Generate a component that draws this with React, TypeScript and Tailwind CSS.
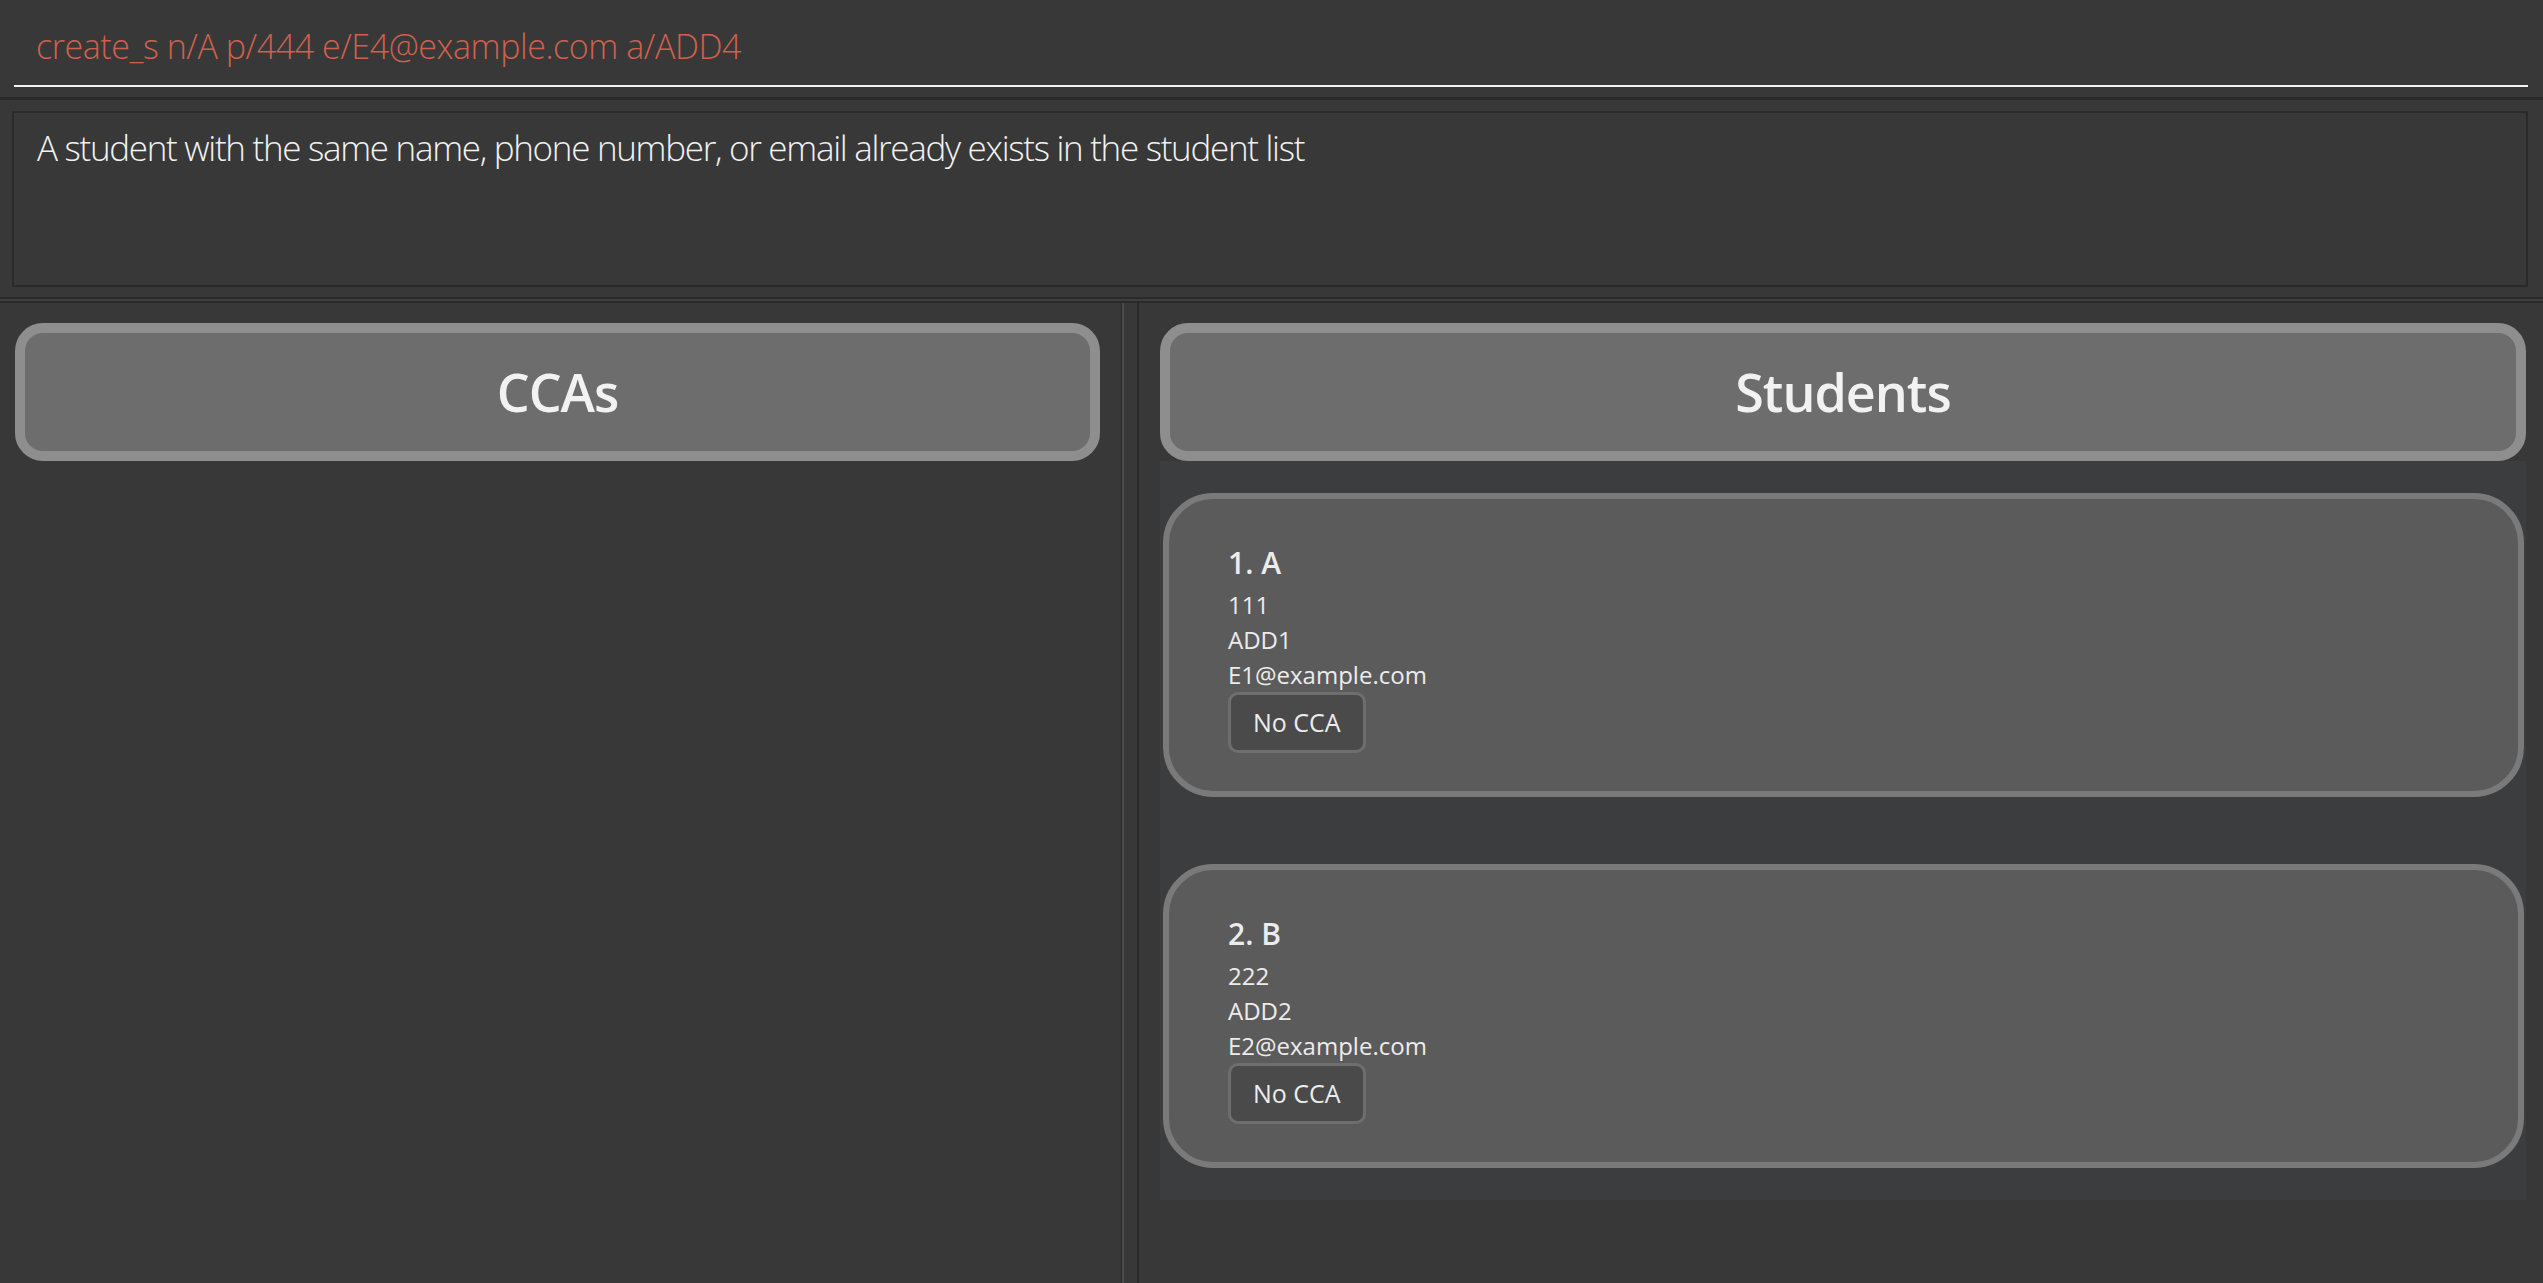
const font = { fontFamily: '"Open Sans", "Noto Sans", sans-serif' };

interface Student {
  index: number;
  name: string;
  phone: string;
  address: string;
  email: string;
}

const students: Student[] = [
  { index: 1, name: 'A', phone: '111', address: 'ADD1', email: 'E1@example.com' },
  { index: 2, name: 'B', phone: '222', address: 'ADD2', email: 'E2@example.com' },
];

function PanelHeader({ title }: { title: string }) {
  return (
    <div className="h-[138px] shrink-0 border-[10px] border-[#8e8e8e] bg-[#6d6d6d] rounded-[28px] flex items-center justify-center">
      <span className="text-[52px] leading-none font-semibold tracking-[-1px] text-[#f2f2f2]">{title}</span>
    </div>
  );
}

function StudentCard({ student }: { student: Student }) {
  return (
    <div className="h-[304px] border-[6px] border-[#7a7a7a] bg-[#5b5b5b] rounded-[50px] pl-[59px] pt-[44px] text-[#ececec]">
      <div className="text-[30px] leading-[40px] font-semibold">
        {student.index}. {student.name}
      </div>
      <div className="mt-[4px] text-[24px] leading-[35px]">
        <div>{student.phone}</div>
        <div>{student.address}</div>
        <div>{student.email}</div>
      </div>
      <div className="inline-flex items-center h-[61px] px-[22px] border-[3px] border-[#6e6e6e] bg-[#4a4a4a] rounded-[10px] text-[25px]">
        No CCA
      </div>
    </div>
  );
}

export default function App() {
  return (
    <div className="w-[2543px] h-[1283px] bg-[#383838] flex flex-col overflow-hidden" style={font}>
      {/* command box */}
      <div className="h-[97px] shrink-0 flex flex-col">
        <div className="pt-[23px] pl-[36px] h-[69px] text-[34px] leading-[46px] font-light tracking-[-0.45px] text-[#d0604c] whitespace-nowrap">
          create_s n/A p/444 e/E4@example.com a/ADD4
        </div>
        <div className="mt-[16px] ml-[14px] mr-[15px] h-[2px] bg-[#f4f4f4]" />
      </div>
      <div className="h-[3px] shrink-0 bg-[#2a2a2a]" />

      {/* result display */}
      <div className="h-[197px] shrink-0 pt-[11px] pl-[12px] pr-[15px]">
        <div className="h-[176px] border-2 border-[#2a2a2a] pt-[11px] pl-[23px] text-[35px] leading-[48px] font-light tracking-[-1.3px] text-[#f2f2f2] whitespace-nowrap">
          A student with the same name, phone number, or email already exists in the student list
        </div>
      </div>
      <div className="h-[2px] shrink-0 bg-[#2a2a2a]" />
      <div className="h-[2px] shrink-0 bg-[#3e3e3e]" />
      <div className="h-[2px] shrink-0 bg-[#2a2a2a]" />

      {/* split pane */}
      <div className="flex-1 flex min-h-0">
        <div className="w-[1121px] shrink-0 pt-[20px] pl-[15px] pr-[21px]">
          <PanelHeader title="CCAs" />
        </div>
        <div className="w-[1px] bg-[#2a2a2a]" />
        <div className="w-[2px] bg-[#4a4a4a]" />
        <div className="w-[13px] bg-[#383838]" />
        <div className="w-[2px] bg-[#2a2a2a]" />
        <div className="flex-1 pt-[20px] pl-[21px] pr-[17px]">
          <PanelHeader title="Students" />
          <div className="bg-[#3c3d3f] pl-[3px] pr-[2px] py-[32px] flex flex-col gap-[67px]">
            {students.map((s) => (
              <StudentCard key={s.index} student={s} />
            ))}
          </div>
        </div>
      </div>
    </div>
  );
}
